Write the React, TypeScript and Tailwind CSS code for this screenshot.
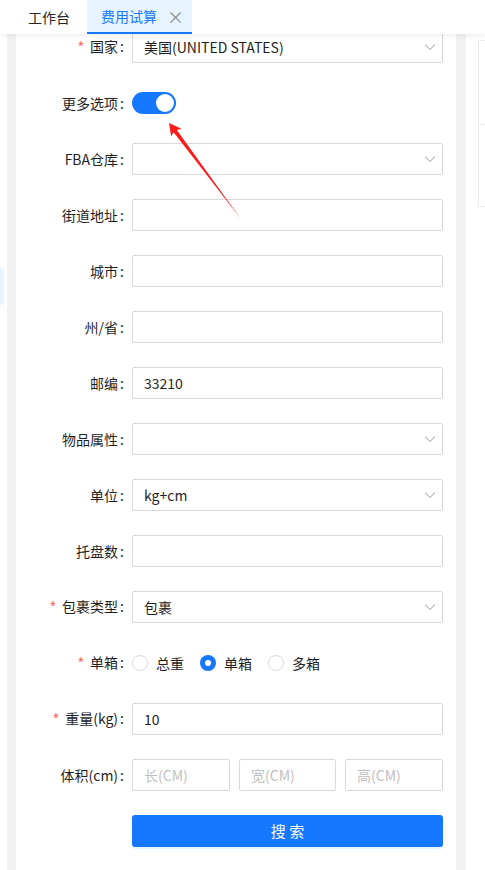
import React from "react";

const Chevron = () => (
  <svg width="12" height="8" viewBox="0 0 12 8" className="shrink-0">
    <path d="M1 1.5l5 5 5-5" fill="none" stroke="#bfbfbf" strokeWidth="1.1" />
  </svg>
);

function Row({ label, required, children }: { label: string; required?: boolean; children: React.ReactNode }) {
  return (
    <div className="flex items-center h-[32px] mb-[24px]">
      <label className="w-[116px] shrink-0 text-right pr-2 text-[14px] text-[#1f1f1f] whitespace-nowrap">
        {required && <span className="text-[#ff4d4f] mr-[5px] font-['Liberation_Mono',monospace] text-[14px]">*</span>}
        {label}
        <span className="ml-[2px]">:</span>
      </label>
      <div className="w-[311px] h-full flex items-center">{children}</div>
    </div>
  );
}

const Input = ({ value, placeholder }: { value?: string; placeholder?: string }) => (
  <div className="w-full h-[32px] border border-[#d9d9d9] rounded-[2px] flex items-center px-[11px] text-[14px]">
    {value ? <span className="text-[#1f1f1f]">{value}</span> : <span className="text-[#bfbfbf]">{placeholder}</span>}
  </div>
);

const Select = ({ value }: { value?: string }) => (
  <div className="w-full h-[32px] border border-[#d9d9d9] rounded-[2px] flex items-center justify-between pl-[11px] pr-[6px] text-[14px]">
    <span className="text-[#1f1f1f]">{value}</span>
    <Chevron />
  </div>
);

const Radio = ({ label, checked }: { label: string; checked?: boolean }) => (
  <div className="flex items-center mr-2">
    {checked ? (
      <span className="w-[16px] h-[16px] rounded-full bg-[#1677ff] flex items-center justify-center">
        <span className="w-[6px] h-[6px] rounded-full bg-white" />
      </span>
    ) : (
      <span className="w-[16px] h-[16px] rounded-full border border-[#d9d9d9] bg-white" />
    )}
    <span className="px-2 text-[14px] text-[#1f1f1f]">{label}</span>
  </div>
);

export default function App() {
  return (
    <div className="relative w-[485px] h-[870px] overflow-hidden bg-white font-['Noto_Sans_CJK_SC','Noto_Sans',sans-serif]">
      {/* tabs */}
      <div className="relative z-10 h-[34px] bg-white flex items-stretch shadow-[0_2px_5px_rgba(0,0,0,0.07)]">
        <div className="w-[87px] flex items-center pl-[28px] text-[14px] text-[#262626]">工作台</div>
        <div className="w-[105px] bg-[#e6f4ff] border-b-2 border-[#1677ff] flex items-center pl-[14px] gap-[10px] text-[14px] text-[#1677ff]">
          <span>费用试算</span>
          <span className="text-[#8c8c8c] text-[17px] leading-none">×</span>
        </div>
      </div>

      <div className="flex h-[850px]">
        {/* sidebar remnant */}
        <div className="w-[7px] bg-white">
          <div className="mt-[234px] w-[4px] h-[37px] rounded-r-[4px] bg-[#e6f4ff]" />
        </div>

        {/* main */}
        <div className="flex-1 bg-[#f2f2f2] pl-[9px] pr-[10px]">
          <div className="w-[440px] h-full bg-white">
            <div className="-mt-[3px]">
              <Row label="国家" required>
                <Select value="美国(UNITED STATES)" />
              </Row>
              <Row label="更多选项">
                <div className="w-[44px] h-[22px] rounded-full bg-[#1677ff] flex items-center justify-end px-[2px]">
                  <span className="w-[18px] h-[18px] rounded-full bg-white" />
                </div>
              </Row>
              <Row label="FBA仓库">
                <Select />
              </Row>
              <Row label="街道地址">
                <Input />
              </Row>
              <Row label="城市">
                <Input />
              </Row>
              <Row label="州/省">
                <Input />
              </Row>
              <Row label="邮编">
                <Input value="33210" />
              </Row>
              <Row label="物品属性">
                <Select />
              </Row>
              <Row label="单位">
                <Select value="kg+cm" />
              </Row>
              <Row label="托盘数">
                <Input />
              </Row>
              <Row label="包裹类型" required>
                <Select value="包裹" />
              </Row>
              <Row label="单箱" required>
                <Radio label="总重" />
                <Radio label="单箱" checked />
                <Radio label="多箱" />
              </Row>
              <Row label="重量(kg)" required>
                <Input value="10" />
              </Row>
              <Row label="体积(cm)">
                <div className="flex gap-[9px] w-full">
                  <div className="w-[98px]"><Input placeholder="长(CM)" /></div>
                  <div className="w-[97px]"><Input placeholder="宽(CM)" /></div>
                  <div className="w-[98px]"><Input placeholder="高(CM)" /></div>
                </div>
              </Row>
              <div className="flex">
                <div className="w-[116px]" />
                <button className="w-[311px] h-[32px] rounded-[3px] bg-[#1677ff] text-white text-[15px] shadow-[0_2px_0_rgba(5,145,255,0.1)]">
                  搜 索
                </button>
              </div>
            </div>
          </div>
        </div>

        {/* right panel */}
        <div className="w-[19px] bg-white pl-[12px] pt-[6px]">
          <div className="h-[167px] border border-r-0 border-[#ececec]">
            <div className="h-[84px] border-b border-[#ececec]" />
          </div>
        </div>
      </div>

      {/* annotation arrow */}
      <svg className="absolute inset-0 pointer-events-none" width="485" height="870">
        <polygon
          points="169,123 181.5,128.8 176.8,130 240.5,218.5 173.6,132.3 171.2,136.6"
          fill="#ff1a1a"
        />
      </svg>
    </div>
  );
}
